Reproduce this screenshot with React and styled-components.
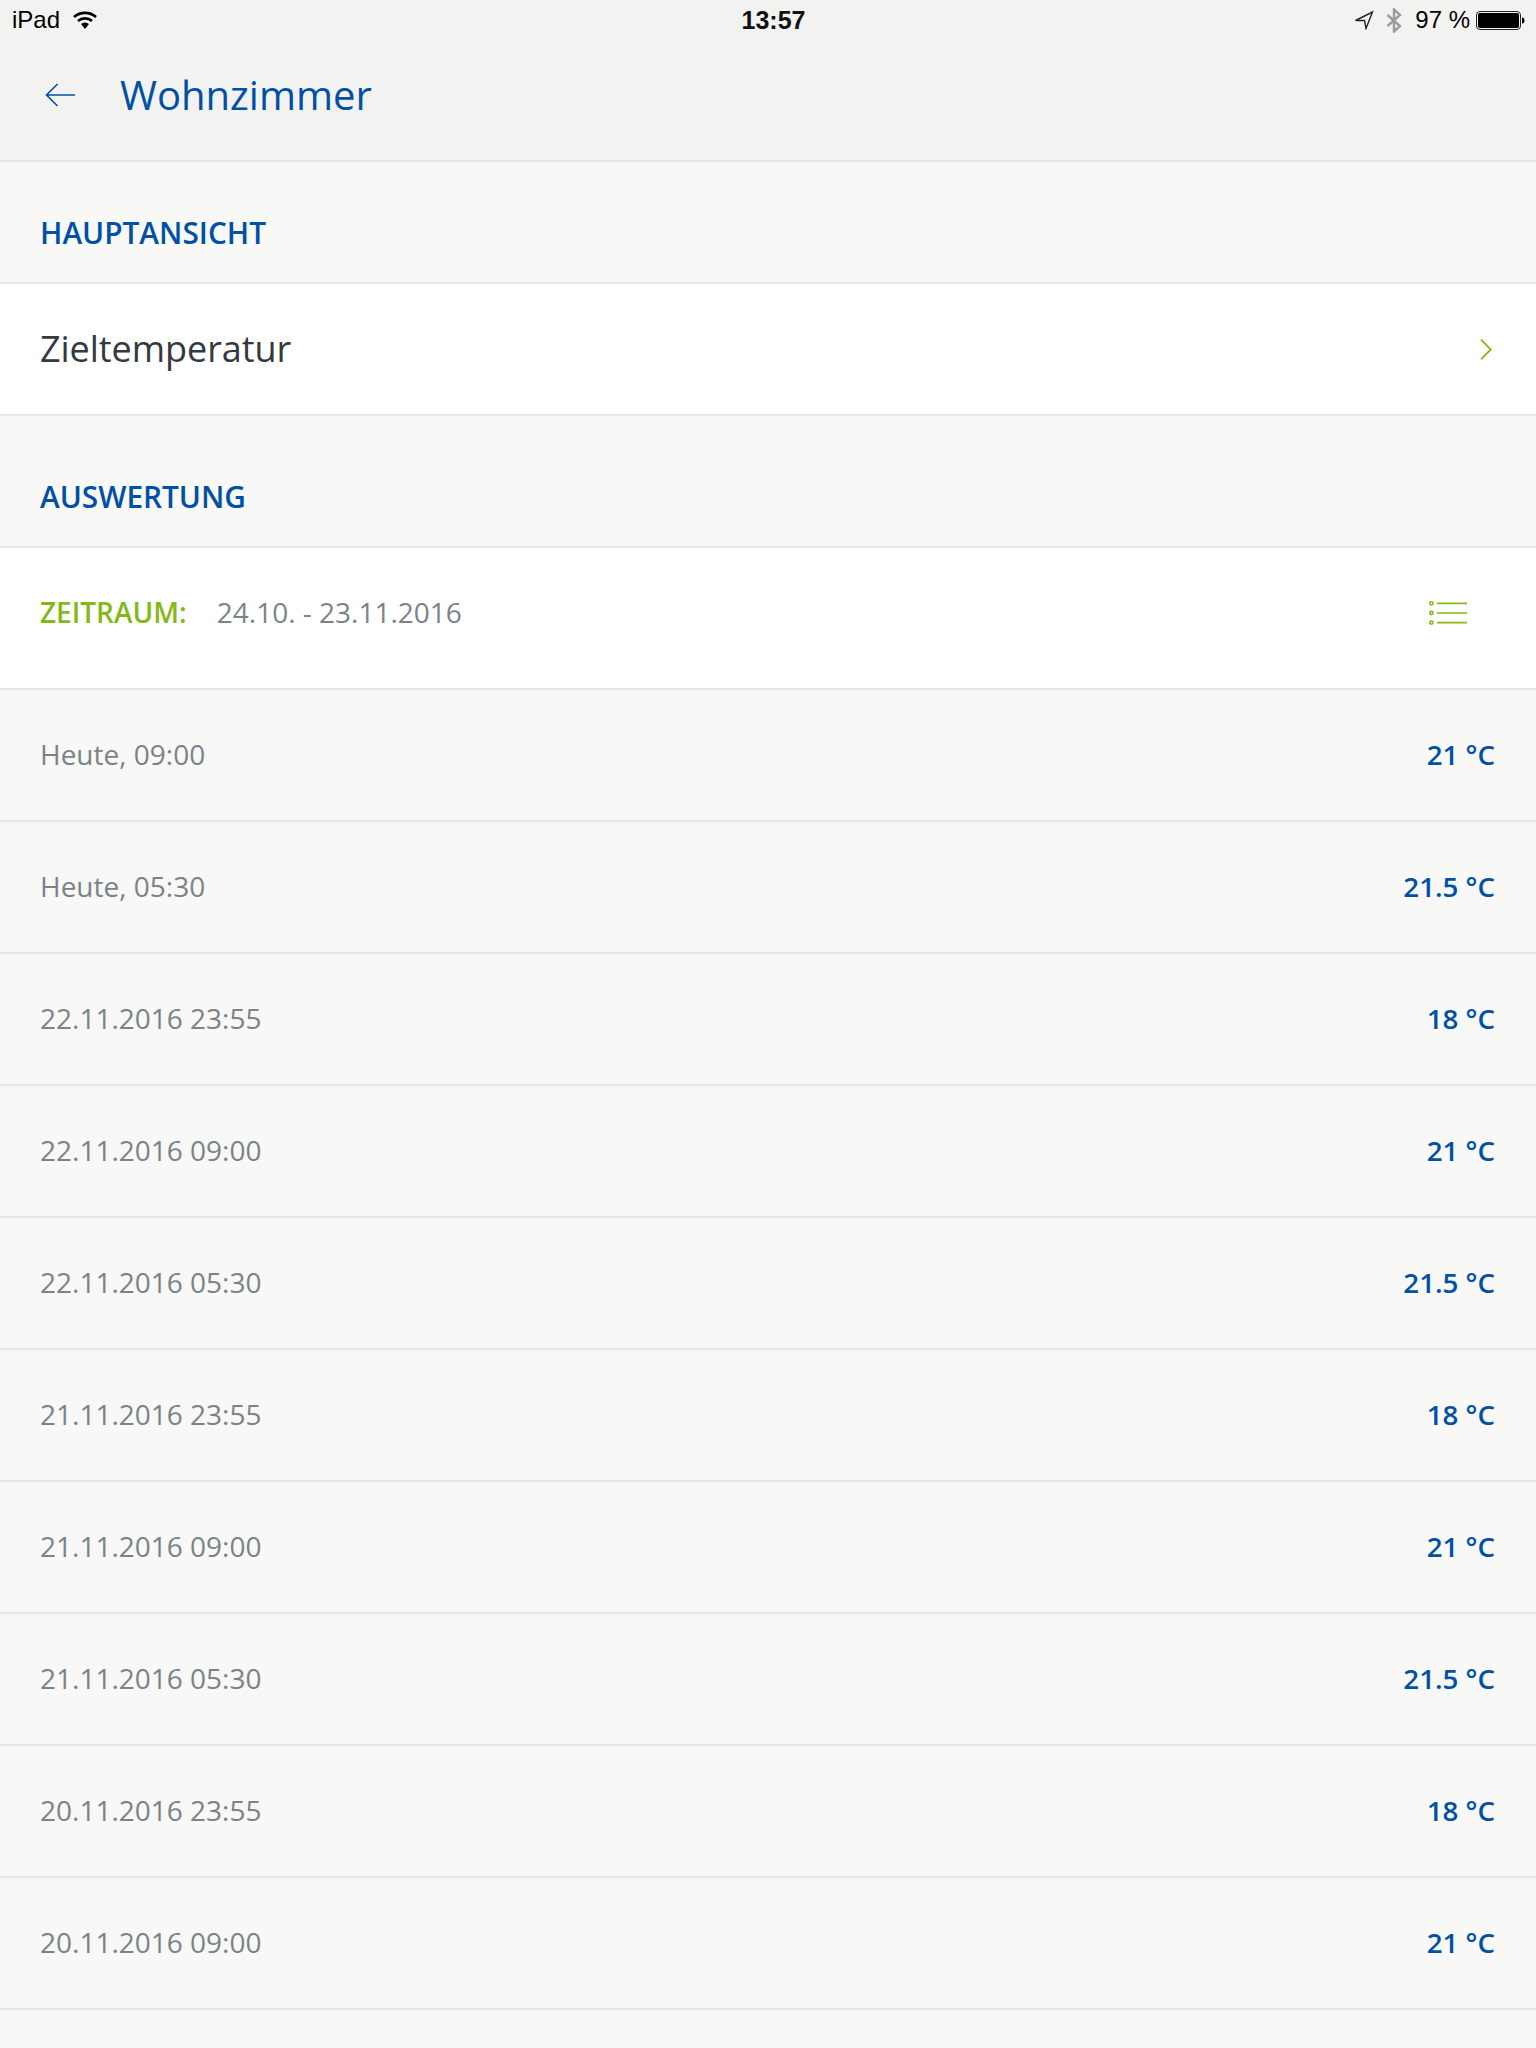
import React from 'react';
import styled, { createGlobalStyle } from 'styled-components';

const GlobalStyle = createGlobalStyle`
  html, body {
    margin: 0;
    padding: 0;
    background: #f8f8f6;
    font-family: "Open Sans", "Noto Sans", sans-serif;
  }
`;

const BLUE = '#0050a5';
const GREEN = '#84b81a';
const GREY = '#7b8389';
const LINE = '#e7e7e3';

const Page = styled.div`
  width: 1536px;
  height: 2048px;
  overflow: hidden;
  background: #f8f8f6;
`;

const Header = styled.header`
  background: #f2f2f1;
  border-bottom: 2px solid ${LINE};
  height: 162px;
  box-sizing: border-box;
`;

const StatusBar = styled.div`
  height: 40px;
  display: grid;
  grid-template-columns: 1fr auto 1fr;
  align-items: center;
  padding: 0 11px 0 12px;
  font-family: "Liberation Sans", sans-serif;
  font-size: 24px;
  color: #000;
`;

const StatusLeft = styled.div`
  display: flex;
  align-items: center;
  gap: 13px;
`;

const StatusTime = styled.div`
  font-weight: 700;
  font-size: 25px;
  margin-left: 10px;
  color: #111;
`;

const StatusRight = styled.div`
  display: flex;
  align-items: center;
  justify-content: flex-end;
  gap: 6px;
`;

const StatusIcons = styled.div`
  display: flex;
  align-items: center;
  gap: 12px;
  margin-right: 7px;
`;

const NavBar = styled.div`
  height: 120px;
  display: flex;
  align-items: center;
  padding: 0 0 12px 45px;
  box-sizing: border-box;
  gap: 45px;

  svg {
    margin-top: 2px;
  }
`;

const Title = styled.h1`
  margin: 0;
  font-size: 40px;
  font-weight: 400;
  color: ${BLUE};
`;

const SectionTitle = styled.div`
  height: ${p => p.$height}px;
  box-sizing: border-box;
  border-bottom: 2px solid ${LINE};
  display: flex;
  align-items: flex-end;
  padding: 0 40px 29px;
  font-size: 29.8px;
  line-height: 40px;
  font-weight: 600;
  color: ${BLUE};
`;

const LinkRow = styled.div`
  height: 132px;
  box-sizing: border-box;
  background: #fff;
  border-bottom: 2px solid ${LINE};
  display: flex;
  align-items: center;
  justify-content: space-between;
  padding: 0 44px 2px 40px;
  font-size: 36px;
  letter-spacing: -0.05px;
  color: #33393d;

  svg {
    margin-top: 2px;
  }
`;

const FilterRow = styled.div`
  height: 142px;
  box-sizing: border-box;
  background: #fff;
  border-bottom: 2px solid ${LINE};
  display: flex;
  align-items: center;
  padding: 0 69px 13px 40px;
  font-size: 28px;
  color: ${GREY};
`;

const FilterLabel = styled.span`
  font-weight: 600;
  color: ${GREEN};
  margin-right: 30px;
`;

const FilterIcon = styled.svg`
  margin-left: auto;
  margin-top: 3px;
`;

const DataRow = styled.div`
  height: 132px;
  box-sizing: border-box;
  border-bottom: 2px solid ${LINE};
  display: flex;
  align-items: center;
  justify-content: space-between;
  padding: 0 41px 2px 40px;
  font-size: 28px;
  color: ${GREY};
`;

const Value = styled.span`
  font-weight: 600;
  font-size: 27.7px;
  color: ${BLUE};
`;

const rows = [
  ['Heute, 09:00', '21 °C'],
  ['Heute, 05:30', '21.5 °C'],
  ['22.11.2016 23:55', '18 °C'],
  ['22.11.2016 09:00', '21 °C'],
  ['22.11.2016 05:30', '21.5 °C'],
  ['21.11.2016 23:55', '18 °C'],
  ['21.11.2016 09:00', '21 °C'],
  ['21.11.2016 05:30', '21.5 °C'],
  ['20.11.2016 23:55', '18 °C'],
  ['20.11.2016 09:00', '21 °C'],
];

const Wifi = () => (
  <svg width="24" height="18" viewBox="0 0 24 18">
    <path d="M1 6C7.5 0.6 16.5 0.6 23 6" fill="none" stroke="#000" strokeWidth="2.8" />
    <path d="M5 10C9 6.6 15 6.6 19 10" fill="none" stroke="#000" strokeWidth="2.8" />
    <path d="M8 13C10.5 11 13.5 11 16 13L12 18Z" fill="#000" />
  </svg>
);

const Location = () => (
  <svg width="20" height="20" viewBox="0 0 20 20">
    <path d="M1.5 10.5L18.5 2L12 18.5L10.5 10.5Z" fill="none" stroke="#222" strokeWidth="1.4" />
  </svg>
);

const Bluetooth = () => (
  <svg width="16" height="25" viewBox="0 0 16 25">
    <path d="M1.5 7L14 18L8 23.5V1.5L14 7L1.5 18" fill="none" stroke="#9b9b9b" strokeWidth="2.4" />
  </svg>
);

const Battery = () => (
  <svg width="49" height="19" viewBox="0 0 49 19">
    <rect x="0.5" y="0.5" width="44" height="18" rx="3.5" fill="none" stroke="#222" strokeWidth="1" />
    <rect x="2" y="2" width="41" height="15" rx="2" fill="#000" />
    <path d="M46 6.5C48 6.5 48.5 8 48.5 9.5S48 12.5 46 12.5Z" fill="#000" />
  </svg>
);

const BackArrow = () => (
  <svg width="30" height="24" viewBox="0 0 30 24">
    <path d="M30 12H1.5M12.5 1L1.5 12L12.5 23" fill="none" stroke={BLUE} strokeWidth="1.6" />
  </svg>
);

const Chevron = () => (
  <svg width="12" height="21" viewBox="0 0 12 21">
    <path d="M1 0.7L10.8 10.5L1 20.3" fill="none" stroke={GREEN} strokeWidth="1.8" />
  </svg>
);

const ListIcon = () => (
  <FilterIcon width="38" height="24" viewBox="0 0 38 24">
    <circle cx="2.4" cy="2.4" r="1.6" fill="none" stroke={GREEN} strokeWidth="1.6" />
    <circle cx="2.4" cy="12" r="1.6" fill="none" stroke={GREEN} strokeWidth="1.6" />
    <circle cx="2.4" cy="21.6" r="1.6" fill="none" stroke={GREEN} strokeWidth="1.6" />
    <path d="M8 2.4H38M8 12H38M8 21.6H38" stroke={GREEN} strokeWidth="1.6" />
  </FilterIcon>
);

const App = () => (
  <Page>
    <GlobalStyle />
    <Header>
      <StatusBar>
        <StatusLeft>iPad <Wifi /></StatusLeft>
        <StatusTime>13:57</StatusTime>
        <StatusRight>
          <StatusIcons><Location /><Bluetooth /></StatusIcons>
          <span>97 %</span>
          <Battery />
        </StatusRight>
      </StatusBar>
      <NavBar>
        <BackArrow />
        <Title>Wohnzimmer</Title>
      </NavBar>
    </Header>
    <SectionTitle $height={122}>HAUPTANSICHT</SectionTitle>
    <LinkRow>Zieltemperatur <Chevron /></LinkRow>
    <SectionTitle $height={132}>AUSWERTUNG</SectionTitle>
    <FilterRow>
      <FilterLabel>ZEITRAUM:</FilterLabel>
      24.10. - 23.11.2016
      <ListIcon />
    </FilterRow>
    {rows.map(([date, value]) => (
      <DataRow key={date}>
        {date}
        <Value>{value}</Value>
      </DataRow>
    ))}
  </Page>
);

export default App;
